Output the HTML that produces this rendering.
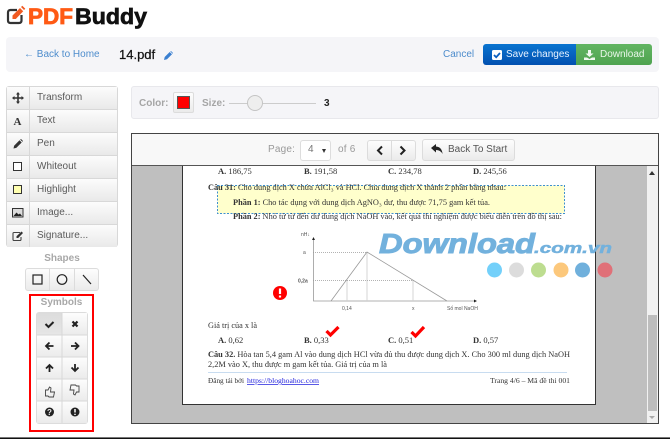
<!DOCTYPE html>
<html><head><meta charset="utf-8"><style>
html,body{margin:0;padding:0;background:#fff}
body{width:670px;height:439px;overflow:hidden;position:relative;font-family:"Liberation Sans",sans-serif;font-size:10px;color:#444}
.a{position:absolute;white-space:nowrap}
.box{position:absolute;box-sizing:border-box}
.btn{position:absolute;box-sizing:border-box;border:1px solid #dcdcdc;background:linear-gradient(#fdfdfd,#ebebeb)}
.row{position:absolute;left:7px;width:110px;height:23px;box-sizing:border-box;border-bottom:1px solid #d8d8d8;background:linear-gradient(#fcfcfc,#e9e9e9)}
.row span{position:absolute;left:30px;top:5px;font-size:10px;color:#5a5a5a}
.row i{position:absolute;left:22px;top:0;bottom:0;width:1px;background:#d8d8d8}
.row svg{position:absolute;left:5px;top:5px}
svg{display:block}
</style></head><body>

<!-- logo -->
<svg class="a" style="left:0;top:0" width="160" height="32" viewBox="0 0 160 32" font-family="Liberation Sans, sans-serif" font-weight="bold" font-size="22">
<path d="M17 10H10.500Q8 10 8 12.500V20.500Q8 23 10.500 23H19Q21.500 23 21.500 20.500V15" fill="none" stroke="#333" stroke-width="2.200"/>
<path d="M12.500 19V15.500L20 8l3.200 3.200L15.800 19z" fill="#f15a22"/><path d="M21 7l1.300-1.300 3 3L24 10z" fill="#f15a22"/>
<text x="28" y="24" fill="#ff5a14" stroke="#ff5a14" stroke-width=".8" textLength="45" lengthAdjust="spacingAndGlyphs">PDF</text>
<text x="75" y="24" fill="#111" stroke="#111" stroke-width=".7" textLength="72" lengthAdjust="spacingAndGlyphs">Buddy</text>
</svg>

<!-- top bar -->
<div class="box" style="left:6px;top:37px;width:653px;height:35px;background:#f5f5f8;border-radius:4px"></div>
<div class="a" style="left:24px;top:49px;font-size:10px;color:#4d8ccc">← Back to Home</div>
<div class="a" style="left:119px;top:47px;font-size:13px;color:#111;-webkit-text-stroke:.25px #111">14.pdf</div>
<svg class="a" style="left:164px;top:51px" width="9" height="9" viewBox="0 0 9 9"><path d="M0 9L.7 6 5.700 1 8 3.300 3 8.300zM6.300.4L7 0l2 2-.4.700z" fill="#3a7fd0"/></svg>
<div class="a" style="left:443px;top:49px;font-size:10px;color:#4d8ccc">Cancel</div>
<div class="box" style="left:483px;top:44px;width:93px;height:21px;background:linear-gradient(#0a74d0,#0250b0);border-radius:3px 0 0 3px"></div>
<svg class="a" style="left:492px;top:50px" width="10" height="10" viewBox="0 0 10 10"><rect width="10" height="10" rx="1.500" fill="#fff"/><path d="M2 5l2.200 2.200L8 3" fill="none" stroke="#0a5fc0" stroke-width="1.800"/></svg>
<div class="a" style="left:506px;top:49px;font-size:10px;color:#e8f2ff">Save changes</div>
<div class="box" style="left:576px;top:44px;width:76px;height:21px;background:linear-gradient(#62b562,#4fa350);border-radius:0 3px 3px 0"></div>
<svg class="a" style="left:584px;top:50px" width="11" height="10" viewBox="0 0 11 10"><path d="M4 0H7V3.500H9.500L5.500 7 1.500 3.500H4zM0 7.500H3L5.500 9 8 7.500H11V10H0z" fill="#f0f8f0"/></svg>
<div class="a" style="left:600px;top:49px;font-size:10px;color:#e9f6e9">Download</div>

<!-- tool list -->
<div class="box" style="left:6px;top:86px;width:112px;height:161px;border:1px solid #d8d8d8;border-radius:3px;background:#eee"></div>
<div class="row" style="top:87px"><i></i><span>Transform</span><svg width="12" height="12" viewBox="0 0 12 12"><path d="M6 0L8 2.500H6.800V5.200H9.500V4L12 6 9.500 8V6.800H6.800V9.500H8L6 12 4 9.500H5.200V6.800H2.500V8L0 6 2.500 4V5.200H5.200V2.500H4z" fill="#333"/></svg></div>
<div class="row" style="top:110px"><i></i><span>Text</span><svg width="12" height="12" viewBox="0 0 12 12"><text x="1.500" y="10" font-family="Liberation Serif" font-weight="bold" font-size="11" fill="#333">A</text></svg></div>
<div class="row" style="top:133px"><i></i><span>Pen</span><svg width="12" height="12" viewBox="0 0 12 12"><path d="M1.500 10.500l.6-2.800L7.500 2.300l2.200 2.200-5.400 5.400zM8.200 1.600l.8-.6 2 2-.6.800z" fill="#333"/></svg></div>
<div class="row" style="top:156px"><i></i><span>Whiteout</span><svg width="12" height="12" viewBox="0 0 12 12"><rect x="1.500" y="1.500" width="8" height="8" fill="#fff" stroke="#333"/></svg></div>
<div class="row" style="top:179px"><i></i><span>Highlight</span><svg width="12" height="12" viewBox="0 0 12 12"><rect x="1.500" y="1.500" width="8" height="8" fill="#ffffb0" stroke="#333"/></svg></div>
<div class="row" style="top:202px"><i></i><span>Image...</span><svg width="12" height="12" viewBox="0 0 12 12"><rect x=".5" y="1.500" width="10.500" height="8.500" fill="#ddd" stroke="#333"/><path d="M1.500 9l3-3.500 2 2 1.500-1 2 2.500z" fill="#222"/></svg></div>
<div class="row" style="top:225px;height:22px;border-bottom:0"><i></i><span>Signature...</span><svg width="12" height="12" viewBox="0 0 12 12"><path d="M8 2.500H2Q1 2.500 1 3.500V9.500Q1 10.500 2 10.500H8Q9 10.500 9 9.500V7" fill="none" stroke="#444" stroke-width="1.100"/><path d="M4.500 8V6.200L9.500 1.500 11 3 6.200 8z" fill="#333"/></svg></div>

<!-- shapes -->
<div class="a" style="left:0;width:124px;text-align:center;top:253px;font-size:10px;font-weight:bold;color:#a8a8a8">Shapes</div>
<div class="btn" style="left:25px;top:268px;width:74px;height:23px;border-radius:3px"></div>
<div class="box" style="left:49px;top:269px;width:1px;height:21px;background:#dcdcdc"></div>
<div class="box" style="left:74px;top:269px;width:1px;height:21px;background:#dcdcdc"></div>
<svg class="a" style="left:25px;top:268px" width="74" height="23" viewBox="0 0 74 23"><rect x="8" y="7" width="9" height="9" fill="none" stroke="#222" stroke-width="1.200"/><circle cx="37" cy="11.500" r="4.800" fill="none" stroke="#222" stroke-width="1.200"/><path d="M58 7l8 9" stroke="#222" stroke-width="1.200"/></svg>

<!-- symbols -->
<div class="box" style="left:29px;top:294px;width:65px;height:138px;border:2px solid #f00"></div>
<div class="a" style="left:29px;width:65px;text-align:center;top:297px;font-size:10px;font-weight:bold;color:#a8a8a8">Symbols</div>
<div class="btn" style="left:36px;top:312px;width:52px;height:112px;border-radius:3px;background:#eee"></div>
<div class="box" style="left:37px;top:313px;width:25px;height:22px;background:linear-gradient(#dcdcdc,#e6e6e6)"></div>
<div class="box" style="left:62px;top:313px;width:25px;height:22px;background:linear-gradient(#fdfdfd,#ebebeb)"></div>
<div class="box" style="left:37px;top:335px;width:50px;height:22px;background:linear-gradient(#fdfdfd,#ebebeb)"></div>
<div class="box" style="left:37px;top:357px;width:50px;height:22px;background:linear-gradient(#fdfdfd,#ebebeb)"></div>
<div class="box" style="left:37px;top:379px;width:50px;height:22px;background:linear-gradient(#fdfdfd,#ebebeb)"></div>
<div class="box" style="left:37px;top:401px;width:50px;height:22px;background:linear-gradient(#fdfdfd,#ebebeb)"></div>
<svg class="a" style="left:36px;top:312px" width="52" height="112" viewBox="0 0 52 112">
<path d="M26 1V111M1 23H51M1 45H51M1 67H51M1 89H51" stroke="#d8d8d8" fill="none"/>
<path d="M9.500 12l3 3 5-5" fill="none" stroke="#222" stroke-width="2"/>
<path d="M36.500 9.500l5 5M41.500 9.500l-5 5" fill="none" stroke="#222" stroke-width="2.200"/>
<path d="M17.500 34H10.500M13.500 30.500L10 34l3.500 3.500" fill="none" stroke="#222" stroke-width="1.800"/>
<path d="M35 34H42M39 30.500L42.500 34 39 37.500" fill="none" stroke="#222" stroke-width="1.800"/>
<path d="M13.500 60V53M10 56.500l3.500-3.500 3.500 3.500" fill="none" stroke="#222" stroke-width="1.800"/>
<path d="M39 52V59M35.500 55.500l3.500 3.500 3.500-3.500" fill="none" stroke="#222" stroke-width="1.800"/>
<path d="M9.500 78v6h2.500l1 1h4.500l1-5h-4l.5-4-1.500-1-1.500 3z" fill="none" stroke="#444" stroke-width=".9"/>
<path d="M43 80v-6h-2.500l-1-1h-4.500l-1 5h4l-.5 4 1.500 1 1.500-3z" fill="none" stroke="#444" stroke-width=".9"/>
<circle cx="13.500" cy="100" r="4.500" fill="#222"/><text x="13.500" y="103" font-size="8" font-weight="bold" fill="#eee" text-anchor="middle" font-family="Liberation Sans">?</text>
<circle cx="39" cy="100" r="4.500" fill="#222"/><path d="M39 97v3.500M39 101.800v1.200" stroke="#eee" stroke-width="1.600"/>
</svg>

<!-- options bar -->
<div class="box" style="left:131px;top:86px;width:528px;height:33px;background:#f5f5f8;border:1px solid #e8e8ec;border-radius:3px"></div>
<div class="a" style="left:139px;top:98px;font-size:10px;font-weight:bold;color:#a5a5a5">Color:</div>
<div class="btn" style="left:173px;top:92px;width:21px;height:21px;border-radius:2px"></div>
<div class="box" style="left:177px;top:96px;width:13px;height:13px;background:#f00;border:1px solid #555"></div>
<div class="a" style="left:202px;top:98px;font-size:10px;font-weight:bold;color:#a5a5a5">Size:</div>
<div class="box" style="left:229px;top:103px;width:87px;height:1px;background:#ccc"></div>
<div class="box" style="left:247px;top:95px;width:16px;height:16px;border-radius:50%;background:#eee;border:1px solid #c4c4c4"></div>
<div class="a" style="left:324px;top:98px;font-size:10px;font-weight:bold;color:#222">3</div>

<!-- viewer -->
<div class="box" style="left:131px;top:133px;width:528px;height:291px;border:1px solid #444;background:#f8f8f8"></div>
<div class="box" style="left:132px;top:165px;width:526px;height:1px;background:#555"></div>
<div class="a" style="left:268px;top:144px;font-size:10px;letter-spacing:.2px;color:#999">Page:</div>
<div class="box" style="left:300px;top:140px;width:31px;height:21px;background:#fff;border:1px solid #ddd;border-radius:3px"></div>
<div class="a" style="left:308px;top:144px;font-size:10px;color:#777">4</div>
<div class="a" style="left:322px;top:149px;width:0;height:0;border:2.500px solid transparent;border-top:4px solid #333;border-bottom:0"></div>
<div class="a" style="left:338px;top:144px;font-size:10px;letter-spacing:.2px;color:#999">of 6</div>
<div class="btn" style="left:367px;top:140px;width:49px;height:21px;border-radius:3px"></div>
<div class="box" style="left:391px;top:141px;width:1px;height:19px;background:#dcdcdc"></div>
<svg class="a" style="left:367px;top:140px" width="49" height="21" viewBox="0 0 49 21"><path d="M15 6.500L11 10.500l4 4M33.500 6.500L37.500 10.500l-4 4" fill="none" stroke="#222" stroke-width="2"/></svg>
<div class="btn" style="left:422px;top:139px;width:93px;height:22px;border-radius:3px"></div>
<svg class="a" style="left:431px;top:144px" width="12" height="11" viewBox="0 0 12 11"><path d="M0 4L5 0V2.500Q11 3 11.500 10 9.500 6 5 6V8.500z" fill="#222"/></svg>
<div class="a" style="left:448px;top:144px;font-size:10px;color:#555">Back To Start</div>

<div class="box" style="left:132px;top:166px;width:515px;height:257px;background:#bfbfbf"></div>
<div class="box" style="left:647px;top:166px;width:11px;height:257px;background:#f1f1f1"></div>
<div class="box" style="left:648px;top:315px;width:9px;height:96px;background:#bdbdbd"></div>
<div class="a" style="left:649px;top:171px;width:0;height:0;border:3.500px solid transparent;border-bottom:4px solid #333;border-top:0"></div>
<div class="a" style="left:649px;top:416px;width:0;height:0;border:3.500px solid transparent;border-top:3px solid #aaa;border-bottom:0"></div>

<div class="box" style="left:182px;top:166px;width:414px;height:239px;background:#fff;border:1px solid #333;border-top:0"></div>

<!-- document -->
<svg class="a" style="left:0;top:0" width="670" height="439" viewBox="0 0 670 439" font-family="Liberation Serif, serif" font-size="8.500" fill="#333">
<rect x="217.500" y="185.500" width="347" height="28" fill="#ffffcc" stroke="#3d8fd0" stroke-dasharray="2 1.500" stroke-width="1"/>
<text x="218" y="174"><tspan font-weight="bold">A.</tspan> 186,75</text>
<text x="304" y="174"><tspan font-weight="bold">B.</tspan> 191,58</text>
<text x="388" y="174"><tspan font-weight="bold">C.</tspan> 234,78</text>
<text x="473" y="174"><tspan font-weight="bold">D.</tspan> 245,56</text>
<text x="208" y="190" textLength="298" lengthAdjust="spacingAndGlyphs"><tspan font-weight="bold">Câu 31:</tspan> Cho dung dịch X chứa AlCl₃ và HCl. Chia dung dịch X thành 2 phần bằng nhau:</text>
<text x="233" y="205" textLength="257" lengthAdjust="spacingAndGlyphs"><tspan font-weight="bold">Phần 1:</tspan> Cho tác dụng với dung dịch AgNO₃ dư, thu được 71,75 gam kết tủa.</text>
<text x="233" y="219" textLength="329" lengthAdjust="spacingAndGlyphs"><tspan font-weight="bold">Phần 2:</tspan> Nhỏ từ từ đến dư dung dịch NaOH vào, kết quả thí nghiệm được biểu diễn trên đồ thị sau:</text>

<g fill="none" stroke="#999" stroke-width=".8">
<path d="M313.500 239V301H475"/>
<path d="M331 301L367 252 447 301"/>
<path d="M313 252.500H367V301M313 280.500H413V301M347 280.500V301" stroke-dasharray="1 1"/>
</g>
<path d="M313.500 237l-1.500 3h3zM477 301l-3-1.500v3z" fill="#222"/>
<g font-size="5" fill="#555" font-family="Liberation Sans, sans-serif">
<text x="301" y="236">nH↓</text><text x="303" y="254">a</text>
<text x="298" y="282.500" font-weight="bold">0,2a</text><text x="342" y="310">0,14</text><text x="412" y="310">x</text><text x="447" y="310">Số mol NaOH</text>
</g>

<text x="208" y="328" textLength="49" lengthAdjust="spacingAndGlyphs">Giá trị của x là</text>
<text x="218" y="343"><tspan font-weight="bold">A.</tspan> 0,62</text>
<text x="304" y="343"><tspan font-weight="bold">B.</tspan> 0,33</text>
<text x="388" y="343"><tspan font-weight="bold">C.</tspan> 0,51</text>
<text x="473" y="343"><tspan font-weight="bold">D.</tspan> 0,57</text>
<text x="208" y="357" textLength="362" lengthAdjust="spacingAndGlyphs"><tspan font-weight="bold">Câu 32.</tspan> Hòa tan 5,4 gam Al vào dung dịch HCl vừa đủ thu được dung dịch X. Cho 300 ml dung dịch NaOH</text>
<text x="208" y="367" textLength="179" lengthAdjust="spacingAndGlyphs">2,2M vào X, thu được m gam kết tủa. Giá trị của m là</text>
<path d="M208 372.500H567" stroke="#c8dcf0" stroke-width="1"/>
<text x="208" y="383" font-size="7.500" textLength="36" lengthAdjust="spacingAndGlyphs">Đăng tải bởi</text>
<text x="247" y="383" font-size="7.500" fill="#2222dd" text-decoration="underline" textLength="72" lengthAdjust="spacingAndGlyphs">https://bloghoahoc.com</text>
<text x="490" y="383" font-size="7.500" textLength="80" lengthAdjust="spacingAndGlyphs">Trang 4/6 – Mã đề thi 001</text>

<circle cx="280" cy="293" r="7" fill="#f00"/><path d="M280 288.500V294M280 295.500V297.500" stroke="#fff" stroke-width="2.200"/>
<path d="M326.500 331l4 4 8-8" fill="none" stroke="#f00" stroke-width="3.200"/>
<path d="M411.500 332l4 4 8.500-9" fill="none" stroke="#f00" stroke-width="3.200"/>

<text x="379" y="253" font-family="Liberation Sans, sans-serif" font-weight="bold" font-style="italic" font-size="28" fill="#72b1dd" stroke="#72b1dd" stroke-width="1" textLength="156" lengthAdjust="spacingAndGlyphs">Download</text>
<text x="534" y="253" font-family="Liberation Sans, sans-serif" font-weight="bold" font-style="italic" font-size="15" fill="#72b1dd" stroke="#72b1dd" stroke-width=".5" textLength="78" lengthAdjust="spacingAndGlyphs">.com.vn</text>
<circle cx="494.500" cy="270" r="7.500" fill="#73d0fa"/><circle cx="516.500" cy="270" r="7.500" fill="#dcdcdc"/><circle cx="538.500" cy="270" r="7.500" fill="#bddd90"/><circle cx="561" cy="270" r="7.500" fill="#fcc87c"/><circle cx="582.500" cy="270" r="7.500" fill="#70b0dc"/><circle cx="605" cy="270" r="7.500" fill="#e07078"/>
</svg>

<div class="box" style="left:0;top:437px;width:670px;height:2px;background:#111;border-top:1px solid #777"></div>
</body></html>
